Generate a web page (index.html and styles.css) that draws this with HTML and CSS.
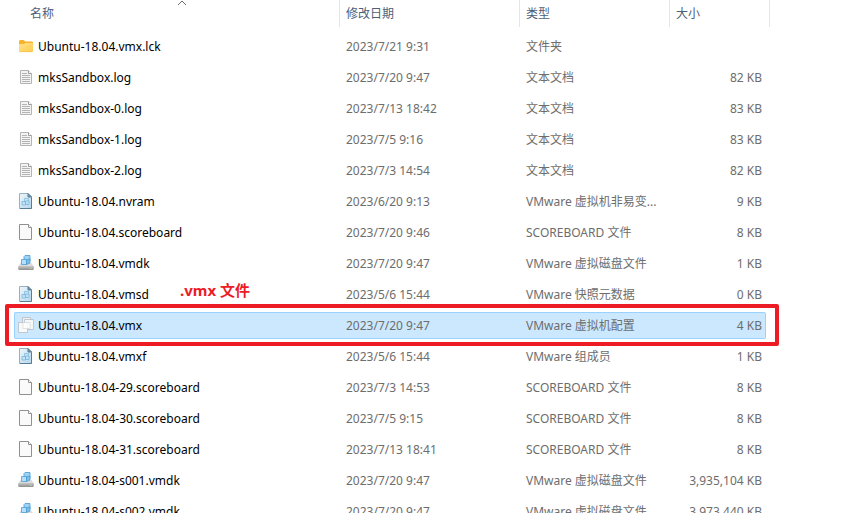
FILE: index.html
```
<!DOCTYPE html>
<html lang="zh-CN">
<head>
    <meta charset="UTF-8">
    <meta name="viewport" content="width=device-width, initial-scale=1.0">
    <title>Ubuntu-18.04</title>
    <link rel="stylesheet" href="styles.css">
</head>
<body>
    <!-- Icon shapes shared by the rows -->
    <svg class="icon-defs" aria-hidden="true">
        <defs>
            <linearGradient id="folder-fill" x1="0" y1="0" x2="1" y2="1">
                <stop offset="0" stop-color="#ffe28f"/>
                <stop offset="1" stop-color="#ffcb4a"/>
            </linearGradient>
            <linearGradient id="vm-fill" x1="0" y1="0" x2="1" y2="1">
                <stop offset="0" stop-color="#eff7fb"/>
                <stop offset="1" stop-color="#b5d6ea"/>
            </linearGradient>
            <linearGradient id="disk-fill" x1="0" y1="0" x2="0" y2="1">
                <stop offset="0" stop-color="#c9c9c9"/>
                <stop offset="1" stop-color="#8c8c8c"/>
            </linearGradient>
        </defs>
        <symbol id="icon-folder" viewBox="0 0 16 16">
            <path d="M1 3.5Q1 2 2.2 2H5.5L7.3 3.5H14Q15 3.5 15 4.5V8H1z" fill="#f5b42a"/>
            <path d="M1 6H6L7.5 5H15V13Q15 14 14 14H2Q1 14 1 13z" fill="url(#folder-fill)"/>
            <path d="M1.5 13.7H14.5" stroke="#f3bd45" stroke-width=".6"/>
        </symbol>
        <symbol id="icon-text" viewBox="0 0 16 16">
            <path d="M2.5 1.5H10.5L13.5 4.5V14.5H2.5z" fill="#f3f3f3" stroke="#b4b4b4"/>
            <path d="M10.5 1.5V4.5H13.5" fill="#fff" stroke="#9a9a9a"/>
            <path d="M4 4.5H9M4 6.5H12M4 8.5H12M4 10.5H12M4 12.5H12" stroke="#b4b4b4"/>
        </symbol>
        <symbol id="icon-blank" viewBox="0 0 16 16">
            <path d="M1.5.5H10.5L13.5 3.5V15.5H1.5z" fill="#fafafa" stroke="#909090"/>
            <path d="M10.5.5V3.5H13.5" fill="#fff" stroke="#909090"/>
        </symbol>
        <symbol id="icon-vm" viewBox="0 0 16 16">
            <path d="M1.5.5H10L13.5 4V15.5H1.5z" fill="url(#vm-fill)" stroke="#9ab0bf"/>
            <path d="M2 15.5H13.5V4.5" fill="none" stroke="#587d97"/>
            <path d="M10 .5V4H13.5z" fill="#7898ae" stroke="#587d97"/>
            <path d="M6.5 5.5H10.5V9H6.5z" fill="#c6e4f6" stroke="#83bde0" stroke-width=".8"/>
            <path d="M4 8.5H7.5V12H4zM7.5 8H11V11.5H7.5z" fill="#c1e2f6" stroke="#79b6dd" stroke-width=".8"/>
        </symbol>
        <symbol id="icon-disk" viewBox="0 0 16 16">
            <path d="M2.5 8H13.5L15.8 11.5H.2z" fill="#dcdcdc"/>
            <path d="M.2 11H15.8V13.5Q15.8 15 14.5 15H1.5Q.2 15 .2 13.5z" fill="url(#disk-fill)"/>
            <path d="M11.5 13.2H14" stroke="#b4d49b"/>
            <path d="M6 1.5L7 .5H12V5.5L11 6.5H6z" fill="#9cd2f6" stroke="#4a9bd2" stroke-width=".8"/>
            <path d="M3.5 4.5H8.5V9.5H3.5z" fill="#b6e0fa" stroke="#4b9ed4" stroke-width=".8"/>
            <path d="M8.5 5L12 4V8L8.5 9.5z" fill="#79bfea" stroke="#4a9bd2" stroke-width=".8"/>
        </symbol>
        <symbol id="icon-vmx" viewBox="0 0 16 16">
            <path d="M4.5.5H12.5V9.5H4.5z" fill="#eef2f5" stroke="#b8bec3" stroke-width=".8"/>
            <path d="M6.5 2.5H15.5V12.5H6.5z" fill="#f5f7f8" stroke="#b8bec3" stroke-width=".8"/>
            <path d="M.5 5.5H9.5V15.5H.5z" fill="#f8f9fa" stroke="#b8bec3" stroke-width=".8"/>
            <path d="M5 5.5H12V11.5H5z" fill="#fff" fill-opacity=".8" stroke="#d5d8da" stroke-width=".7"/>
        </symbol>
    </svg>

    <main class="file-list">
        <table class="files">
            <colgroup>
                <col class="col-name">
                <col class="col-date">
                <col class="col-type">
                <col class="col-size">
            </colgroup>
            <thead>
                <tr>
                    <th aria-sort="ascending"><button type="button" class="sort first">名称<svg class="sort-arrow" viewBox="0 0 10 6" aria-hidden="true"><path d="M1 5L5 1L9 5"/></svg></button></th>
                    <th><button type="button" class="sort">修改日期</button></th>
                    <th><button type="button" class="sort">类型</button></th>
                    <th><button type="button" class="sort last">大小</button></th>
                </tr>
            </thead>
            <tbody>
                <tr>
                    <td class="name"><svg class="icon"><use href="#icon-folder"/></svg>Ubuntu-18.04.vmx.lck</td>
                    <td>2023/7/21 9:31</td>
                    <td>文件夹</td>
                    <td class="size"></td>
                </tr>
                <tr>
                    <td class="name"><svg class="icon"><use href="#icon-text"/></svg>mksSandbox.log</td>
                    <td>2023/7/20 9:47</td>
                    <td>文本文档</td>
                    <td class="size">82 KB</td>
                </tr>
                <tr>
                    <td class="name"><svg class="icon"><use href="#icon-text"/></svg>mksSandbox-0.log</td>
                    <td>2023/7/13 18:42</td>
                    <td>文本文档</td>
                    <td class="size">83 KB</td>
                </tr>
                <tr>
                    <td class="name"><svg class="icon"><use href="#icon-text"/></svg>mksSandbox-1.log</td>
                    <td>2023/7/5 9:16</td>
                    <td>文本文档</td>
                    <td class="size">83 KB</td>
                </tr>
                <tr>
                    <td class="name"><svg class="icon"><use href="#icon-text"/></svg>mksSandbox-2.log</td>
                    <td>2023/7/3 14:54</td>
                    <td>文本文档</td>
                    <td class="size">82 KB</td>
                </tr>
                <tr>
                    <td class="name"><svg class="icon"><use href="#icon-vm"/></svg>Ubuntu-18.04.nvram</td>
                    <td>2023/6/20 9:13</td>
                    <td>VMware 虚拟机非易变...</td>
                    <td class="size">9 KB</td>
                </tr>
                <tr>
                    <td class="name"><svg class="icon"><use href="#icon-blank"/></svg>Ubuntu-18.04.scoreboard</td>
                    <td>2023/7/20 9:46</td>
                    <td>SCOREBOARD 文件</td>
                    <td class="size">8 KB</td>
                </tr>
                <tr>
                    <td class="name"><svg class="icon"><use href="#icon-disk"/></svg>Ubuntu-18.04.vmdk</td>
                    <td>2023/7/20 9:47</td>
                    <td>VMware 虚拟磁盘文件</td>
                    <td class="size">1 KB</td>
                </tr>
                <tr>
                    <td class="name"><svg class="icon"><use href="#icon-vm"/></svg>Ubuntu-18.04.vmsd</td>
                    <td>2023/5/6 15:44</td>
                    <td>VMware 快照元数据</td>
                    <td class="size">0 KB</td>
                </tr>
                <tr class="selected">
                    <td class="name"><svg class="icon"><use href="#icon-vmx"/></svg>Ubuntu-18.04.vmx<span class="mark-frame"></span><strong class="mark-label">.vmx 文件</strong></td>
                    <td>2023/7/20 9:47</td>
                    <td>VMware 虚拟机配置</td>
                    <td class="size">4 KB</td>
                </tr>
                <tr>
                    <td class="name"><svg class="icon"><use href="#icon-vm"/></svg>Ubuntu-18.04.vmxf</td>
                    <td>2023/5/6 15:44</td>
                    <td>VMware 组成员</td>
                    <td class="size">1 KB</td>
                </tr>
                <tr>
                    <td class="name"><svg class="icon"><use href="#icon-blank"/></svg>Ubuntu-18.04-29.scoreboard</td>
                    <td>2023/7/3 14:53</td>
                    <td>SCOREBOARD 文件</td>
                    <td class="size">8 KB</td>
                </tr>
                <tr>
                    <td class="name"><svg class="icon"><use href="#icon-blank"/></svg>Ubuntu-18.04-30.scoreboard</td>
                    <td>2023/7/5 9:15</td>
                    <td>SCOREBOARD 文件</td>
                    <td class="size">8 KB</td>
                </tr>
                <tr>
                    <td class="name"><svg class="icon"><use href="#icon-blank"/></svg>Ubuntu-18.04-31.scoreboard</td>
                    <td>2023/7/13 18:41</td>
                    <td>SCOREBOARD 文件</td>
                    <td class="size">8 KB</td>
                </tr>
                <tr>
                    <td class="name"><svg class="icon"><use href="#icon-disk"/></svg>Ubuntu-18.04-s001.vmdk</td>
                    <td>2023/7/20 9:47</td>
                    <td>VMware 虚拟磁盘文件</td>
                    <td class="size">3,935,104 KB</td>
                </tr>
                <tr>
                    <td class="name"><svg class="icon"><use href="#icon-disk"/></svg>Ubuntu-18.04-s002.vmdk</td>
                    <td>2023/7/20 9:47</td>
                    <td>VMware 虚拟磁盘文件</td>
                    <td class="size">3,973,440 KB</td>
                </tr>
            </tbody>
        </table>
    </main>
</body>
</html>
```
FILE: styles.css
```
/* Base Styles */
* {
    box-sizing: border-box;
}

body {
    margin: 0;
    height: 100vh;
    overflow: hidden;
    background-color: #fff;
    color: #6d6d6d;
    font-family: "Noto Sans", "Noto Sans CJK SC", sans-serif;
    font-size: 12px;
    line-height: 18px;
}

.icon-defs {
    display: block;
    width: 0;
    height: 0;
}

/* File table */
.file-list {
    padding: 0 78px 0 14px;
}

.files {
    width: 100%;
    margin-top: -4px;
    table-layout: fixed;
    border-collapse: separate;
    border-spacing: 0 4px;
}

.col-date {
    width: 180px;
}

.col-type {
    width: 150px;
}

.col-size {
    width: 96px;
}

/* Column headers */
th {
    height: 29px;
    padding: 0;
    font-weight: normal;
    vertical-align: top;
}

.sort {
    position: relative;
    display: block;
    width: 100%;
    height: 27px;
    padding: 0 6px;
    border: 0;
    border-right: 1px solid #e5e5e5;
    background: none;
    color: #4c607a;
    font: inherit;
    text-align: left;
}

.sort.first {
    padding-left: 16px;
}

.sort.last {
    width: 100px;
}

.sort-arrow {
    position: absolute;
    top: 0;
    left: 50%;
    width: 10px;
    height: 6px;
    fill: none;
    stroke: #6d6d6d;
}

/* Rows */
td {
    height: 27px;
    padding: 0 6px;
    white-space: nowrap;
}

.name {
    padding-left: 4px;
    color: #000;
}

.icon {
    width: 16px;
    height: 16px;
    margin-right: 4px;
    vertical-align: top;
}

.size {
    padding-right: 4px;
    text-align: right;
}

/* Selected row */
.selected {
    position: relative;
}

.selected td {
    border: solid #99d1ff;
    border-width: 1px 0;
    background-color: #cce8ff;
}

.selected td:first-child {
    padding-left: 3px;
    border-left-width: 1px;
    border-radius: 2px 0 0 2px;
}

.selected td:last-child {
    padding-right: 3px;
    border-right-width: 1px;
    border-radius: 0 2px 2px 0;
}

/* Red marker around the selected row */
.mark-frame {
    position: absolute;
    inset: -8px -13px -7px -9px;
    border: 4px solid #ed1c24;
    border-radius: 2px;
}

.mark-label {
    position: absolute;
    top: -32px;
    left: 166px;
    color: #ed1c24;
    font-size: 15px;
    line-height: 20px;
}
```
